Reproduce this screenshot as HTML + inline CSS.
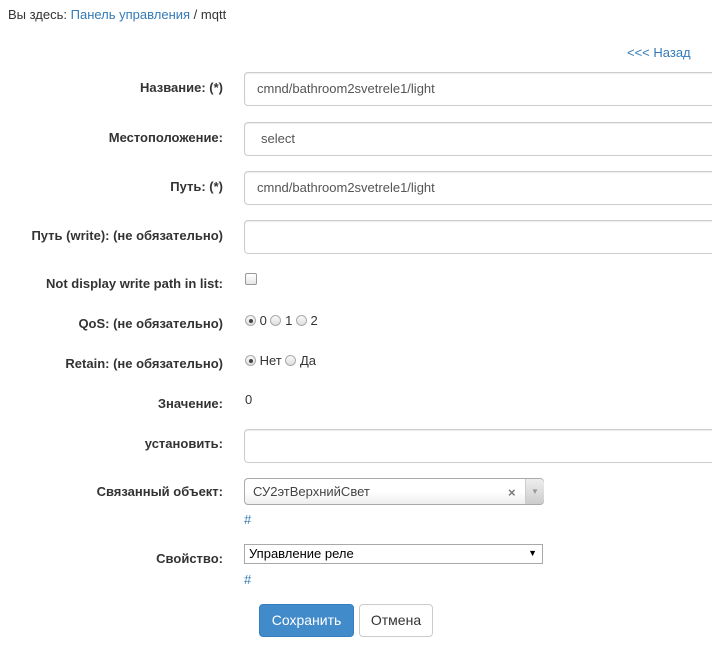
<!DOCTYPE html><html><head><meta charset="utf-8"><style>
body{margin:0;width:712px;height:668px;background:#fff;font-family:"Liberation Sans",sans-serif;font-size:13px;color:#333;position:relative;overflow:hidden}
.a{position:absolute}
.l{position:absolute;right:489px;font-weight:bold;white-space:nowrap;line-height:16px}
.in{position:absolute;left:244px;width:480px;height:34px;border:1px solid #ccc;border-radius:4px;box-shadow:inset 0 1px 1px rgba(0,0,0,.075);box-sizing:border-box;padding-left:12px;line-height:32px;font-size:13px;color:#555}
a,.lk{color:#337ab7;text-decoration:none}
.r{display:inline-block;width:11px;height:11px;border:1px solid #aaa;border-radius:50%;box-sizing:border-box;background:linear-gradient(#fafafa,#ddd);vertical-align:-1px;position:relative}
.r.c::after{content:"";position:absolute;left:2.5px;top:2.5px;width:4px;height:4px;border-radius:50%;background:#444}
</style></head><body>
<div class="a" style="left:8px;top:7px">Вы здесь: <span class="lk">Панель управления</span> / mqtt</div>
<div class="a lk" style="left:627px;top:45px">&lt;&lt;&lt; Назад</div>

<div class="l" style="top:80px">Название: (*)</div>
<div class="in" style="top:72px">cmnd/bathroom2svetrele1/light</div>
<div class="l" style="top:130px">Местоположение:</div>
<div class="in" style="top:122px;padding-left:16px">select</div>
<div class="l" style="top:179px">Путь: (*)</div>
<div class="in" style="top:171px">cmnd/bathroom2svetrele1/light</div>
<div class="l" style="top:228px">Путь (write): (не обязательно)</div>
<div class="in" style="top:220px"></div>
<div class="l" style="top:276px">Not display write path in list:</div>
<div class="a" style="left:245px;top:273px;width:12px;height:12px;border:1px solid #999;border-radius:2px;box-sizing:border-box;background:linear-gradient(#fff,#e6e6e6)"></div>
<div class="l" style="top:316px">QoS: (не обязательно)</div>
<div class="a" style="left:245px;top:313px"><span class="r c"></span> 0 <span class="r"></span> 1 <span class="r"></span> 2</div>
<div class="l" style="top:356px">Retain: (не обязательно)</div>
<div class="a" style="left:245px;top:353px"><span class="r c"></span> Нет <span class="r"></span> Да</div>
<div class="l" style="top:396px">Значение:</div>
<div class="a" style="left:245px;top:392px">0</div>
<div class="l" style="top:436px">установить:</div>
<div class="in" style="top:429px"></div>
<div class="l" style="top:484px">Связанный объект:</div>
<div class="a" style="left:244px;top:478px;width:300px;height:27px;border:1px solid #aaa;border-radius:4px;box-sizing:border-box;background:linear-gradient(#fff 50%,#eee);line-height:25px;padding-left:8px;color:#444">СУ2этВерхнийСвет<span class="a" style="left:263px;top:1px;color:#777;font-weight:bold">×</span><span class="a" style="left:280px;top:0;width:18px;height:25px;border-left:1px solid #ccc;background:linear-gradient(#eee,#ccc);border-radius:0 4px 4px 0;font-size:8px;text-align:center;color:#999">▼</span></div>
<div class="a lk" style="left:244px;top:512px">#</div>
<div class="l" style="top:551px">Свойство:</div>
<div class="a" style="left:244px;top:544px;width:299px;height:20px;border:1px solid #a9a9a9;box-sizing:border-box;line-height:17px;padding-left:4px;color:#000">Управление реле<span class="a" style="right:5px;top:0;font-size:9px">▼</span></div>
<div class="a lk" style="left:244px;top:572px">#</div>
<div class="a" style="left:259px;top:604px;width:95px;height:33px;background:#428bca;border:1px solid #357ebd;border-radius:4px;box-sizing:border-box;color:#fff;text-align:center;line-height:31px;font-size:14px">Сохранить</div>
<div class="a" style="left:359px;top:604px;width:74px;height:33px;background:#fff;border:1px solid #ccc;border-radius:4px;box-sizing:border-box;color:#333;text-align:center;line-height:31px;font-size:14px">Отмена</div>
</body></html>
